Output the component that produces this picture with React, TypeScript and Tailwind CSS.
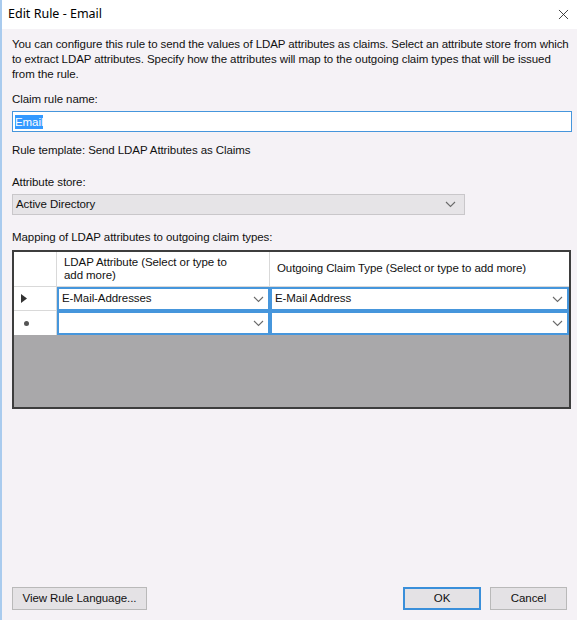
import { X } from "lucide-react";

function Chevron({ className }: { className?: string }) {
    return (
        <svg width="11" height="7" viewBox="0 0 11 7" className={className}>
            <path d="M1 1 L5.5 5.5 L10 1" fill="none" stroke="#6a6a6a" strokeWidth="1.1" />
        </svg>
    );
}

function GridCombo({ value }: { value: string }) {
    return (
        <div className="flex h-full items-center justify-between border-2 border-[#4696dc] bg-white pl-[3px] pr-[4px]">
            <span>{value}</span>
            <Chevron />
        </div>
    );
}

export default function App() {
    return (
        <div className="flex h-[620px] w-[577px] flex-col border-l-2 border-[#a9cbee] bg-[#f5f2f6] text-[11.5px] tracking-[-0.08px] text-[#111] [font-family:'Liberation_Sans',Arial,sans-serif]">
            {/* title bar */}
            <div className="flex h-[29px] items-center justify-between bg-white pl-[6px] pr-[5px]">
                <span className="text-[12.5px] tracking-normal text-black [font-family:'Noto_Sans',sans-serif]">Edit Rule - Email</span>
                <X size={17} strokeWidth={1.2} className="text-[#222]" />
            </div>

            <div className="flex flex-1 flex-col px-[10px] pt-[8px]">
                <p className="whitespace-nowrap leading-[15px]">
                    You can configure this rule to send the values of LDAP attributes as claims. Select an attribute store from which
                    <br />
                    to extract LDAP attributes. Specify how the attributes will map to the outgoing claim types that will be issued
                    <br />
                    from the rule.
                </p>

                <div className="mt-[9px]">Claim rule name:</div>
                <div className="mt-[3px] flex h-[21px] w-[560px] items-center border border-[#4696dc] bg-white px-[2px]">
                    <span className="bg-[#3399ff] leading-[14px] text-white">Email</span>
                </div>

                <div className="mt-[10px]">Rule template: Send LDAP Attributes as Claims</div>

                <div className="mt-[14px]">Attribute store:</div>
                <div className="mt-[3px] flex h-[21px] w-[453px] items-center justify-between border border-[#c9c7ca] bg-[#e6e4e7] pl-[3px] pr-[8px]">
                    <span>Active Directory</span>
                    <Chevron />
                </div>

                <div className="mt-[14px]">Mapping of LDAP attributes to outgoing claim types:</div>
                <div className="mt-[4px] flex h-[159px] w-[559px] flex-col border-2 border-[#3d3d3d] bg-[#a9a8aa]">
                    <div className="grid h-[35px] grid-cols-[43px_213px_1fr] bg-white">
                        <div className="border-r border-b border-[#d9d9d9]" />
                        <div className="flex items-center border-r border-b border-[#d9d9d9] pl-[7px] pr-[4px] leading-[13px]">
                            LDAP Attribute (Select or type to<br />add more)
                        </div>
                        <div className="flex items-center border-b border-[#d9d9d9] pl-[7px]">
                            Outgoing Claim Type (Select or type to add more)
                        </div>
                    </div>
                    <div className="grid h-[24px] grid-cols-[43px_213px_1fr] bg-white">
                        <div className="flex items-center border-r border-b border-[#d9d9d9] pl-[7px]">
                            <svg width="6" height="9" viewBox="0 0 6 9"><path d="M0 0 L6 4.5 L0 9 Z" fill="#333" /></svg>
                        </div>
                        <GridCombo value="E-Mail-Addresses" />
                        <GridCombo value="E-Mail Address" />
                    </div>
                    <div className="grid h-[24px] grid-cols-[43px_213px_1fr] bg-white">
                        <div className="flex items-center border-r border-[#d9d9d9] pl-[10px]">
                            <span className="h-[5px] w-[5px] rounded-full bg-[#555]" />
                        </div>
                        <GridCombo value="" />
                        <GridCombo value="" />
                    </div>
                </div>

                <div className="mt-auto mb-[10px] flex items-center">
                    <button className="h-[23px] w-[135px] border border-[#b9b9b9] bg-[#e4e2e5] text-[11.5px]">View Rule Language...</button>
                    <button className="ml-auto h-[23px] w-[78px] border-2 border-[#3a8fda] bg-[#e4e2e5] text-[11.5px]">OK</button>
                    <button className="ml-[9px] h-[23px] w-[77px] border border-[#b9b9b9] bg-[#e4e2e5] text-[11.5px]">Cancel</button>
                </div>
            </div>
        </div>
    );
}
